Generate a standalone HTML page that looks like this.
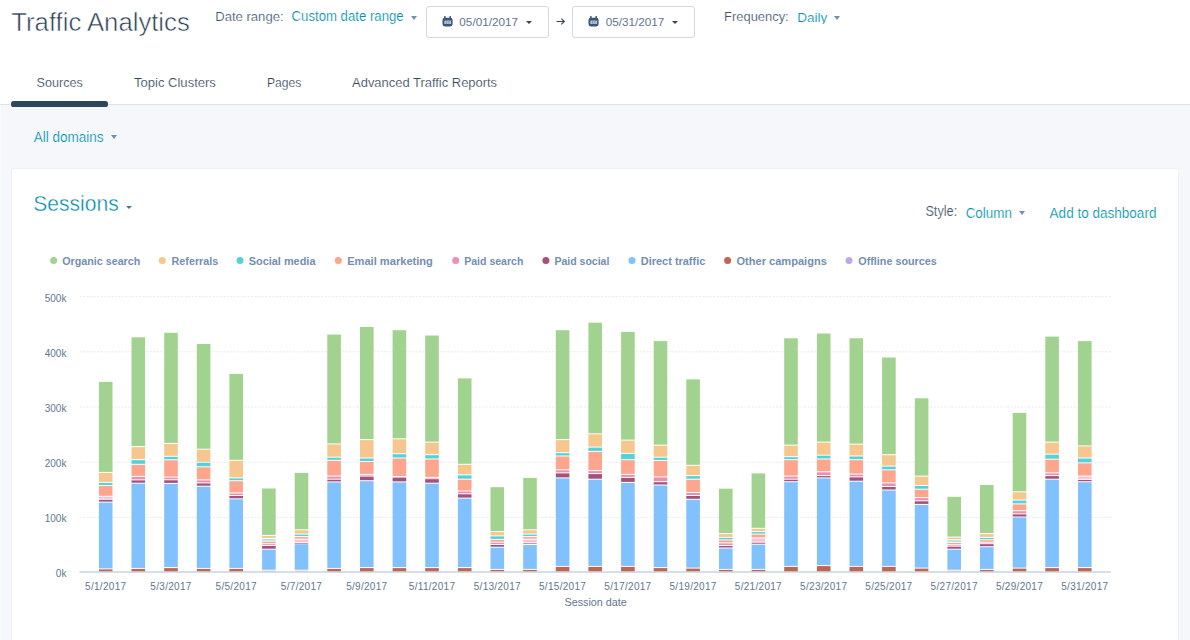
<!DOCTYPE html>
<html><head><meta charset="utf-8"><title>Traffic Analytics</title>
<style>
html,body{margin:0;padding:0;}
body{width:1190px;height:640px;overflow:hidden;background:#f5f7fa;font-family:"Liberation Sans",sans-serif;position:relative;color:#33475b;}
.abs{position:absolute;white-space:nowrap;line-height:1;}
#hdr{position:absolute;left:0;top:0;width:1190px;height:104px;background:#fff;border-bottom:1px solid #dfe3eb;box-sizing:content-box;}
#card{position:absolute;left:11px;top:168px;width:1168px;height:480px;background:#fff;border:1px solid #eef2f6;box-sizing:border-box;border-radius:3px;}
.teal{color:#0091ae;}
.ax{font-family:"Liberation Sans",sans-serif;font-size:10px;fill:#62778f;}
.xl{letter-spacing:0.3px;}
.axt{font-family:"Liberation Sans",sans-serif;font-size:11px;fill:#62778f;}
.lg{font-family:"Liberation Sans",sans-serif;font-size:11px;font-weight:bold;fill:#748eb3;}
.box{position:absolute;top:6px;height:32.4px;width:123px;border:1px solid #d0d9e4;border-radius:3px;box-sizing:border-box;background:#fff;}
.cal{position:absolute;top:16px;}
.caret{position:absolute;width:0;height:0;border-left:3.6px solid transparent;border-right:3.6px solid transparent;border-top:4px solid #33475b;}
</style></head><body>
<div id="hdr"></div>
<div class="caret" style="left:411px;top:15.6px;border-top-color:#6f90b3;"></div>
<div class="box" style="left:426px"></div>
<svg class="cal" style="left:441.6px" width="11" height="11" viewBox="0 0 11 11"><path d="M2.9 0.6v1.6M8.2 0.6v1.6" stroke="#3b5678" stroke-width="1.5" stroke-linecap="round" fill="none"/><rect x="0.5" y="1.7" width="10.1" height="8.7" rx="2.3" fill="#3b5678"/><rect x="2.3" y="4.4" width="6.8" height="3.6" rx="0.5" fill="#b4c2d4"/><path d="M4.55 4.4v3.6M6.85 4.4v3.6" stroke="#6b83a3" stroke-width="0.6"/></svg>
<div class="caret" style="left:525.9px;top:20.9px;border-left-width:3.2px;border-right-width:3.2px;border-top-width:3.4px;"></div>
<svg class="abs" style="left:555.5px;top:16.5px" width="10" height="9" viewBox="0 0 10 9"><path d="M0.5 4.5h8M5.3 1.6l3.1 2.9-3.1 2.9" stroke="#33475b" stroke-width="1.1" fill="none"/></svg>
<div class="box" style="left:571.6px"></div>
<svg class="cal" style="left:587.9px" width="11" height="11" viewBox="0 0 11 11"><path d="M2.9 0.6v1.6M8.2 0.6v1.6" stroke="#3b5678" stroke-width="1.5" stroke-linecap="round" fill="none"/><rect x="0.5" y="1.7" width="10.1" height="8.7" rx="2.3" fill="#3b5678"/><rect x="2.3" y="4.4" width="6.8" height="3.6" rx="0.5" fill="#b4c2d4"/><path d="M4.55 4.4v3.6M6.85 4.4v3.6" stroke="#6b83a3" stroke-width="0.6"/></svg>
<div class="caret" style="left:672.1px;top:20.9px;border-left-width:3.2px;border-right-width:3.2px;border-top-width:3.4px;"></div>
<div class="caret" style="left:834.4px;top:16.1px;border-top-color:#6f90b3;"></div>

<div style="position:absolute;left:11.4px;top:101.4px;width:96.9px;height:5.2px;border-radius:2.6px;background:#2f455c;"></div>

<div class="caret" style="left:110.9px;top:135.2px;border-top-color:#6f90b3;"></div>

<div style="position:absolute;left:0;top:105px;width:1px;height:535px;background:#fbfcfd;"></div>
<div id="card"></div>
<div class="caret" style="left:126.3px;top:205.8px;border-left-width:3.3px;border-right-width:3.3px;border-top-width:3.5px;border-top-color:#56718f;"></div>
<div class="caret" style="left:1019.3px;top:210.8px;border-top-color:#6f90b3;"></div>

<svg class="abs" style="left:0;top:0;font-family:&quot;Liberation Sans&quot;,sans-serif" width="1190" height="640" viewBox="0 0 1190 640">
<line x1="79.7" x2="1111" y1="517.4" y2="517.4" stroke="#e7e9f1" stroke-width="1" stroke-dasharray="2,1.5"/>
<line x1="79.7" x2="1111" y1="462.2" y2="462.2" stroke="#e7e9f1" stroke-width="1" stroke-dasharray="2,1.5"/>
<line x1="79.7" x2="1111" y1="407.0" y2="407.0" stroke="#e7e9f1" stroke-width="1" stroke-dasharray="2,1.5"/>
<line x1="79.7" x2="1111" y1="351.8" y2="351.8" stroke="#e7e9f1" stroke-width="1" stroke-dasharray="2,1.5"/>
<line x1="79.7" x2="1111" y1="296.6" y2="296.6" stroke="#e7e9f1" stroke-width="1" stroke-dasharray="2,1.5"/>
<rect x="98.9" y="381.9" width="13.6" height="90.0" fill="#a2d28f"/>
<rect x="98.9" y="472.9" width="13.6" height="9.0" fill="#f5c78e"/>
<rect x="98.9" y="482.9" width="13.6" height="2.1" fill="#51d3d9"/>
<rect x="98.9" y="486.0" width="13.6" height="9.8" fill="#fea58e"/>
<rect x="98.9" y="496.8" width="13.6" height="2.0" fill="#f4c4d6"/>
<rect x="98.9" y="499.8" width="13.6" height="1.8" fill="#a4517b"/>
<rect x="98.9" y="502.6" width="13.6" height="65.8" fill="#81c1fd"/>
<rect x="98.9" y="569.4" width="13.6" height="2.4" fill="#c0654f"/>
<rect x="131.5" y="337.3" width="13.6" height="108.8" fill="#a2d28f"/>
<rect x="131.5" y="447.1" width="13.6" height="12.1" fill="#f5c78e"/>
<rect x="131.5" y="460.2" width="13.6" height="3.6" fill="#51d3d9"/>
<rect x="131.5" y="464.8" width="13.6" height="11.1" fill="#fea58e"/>
<rect x="131.5" y="476.9" width="13.6" height="2.5" fill="#ea90b1"/>
<rect x="131.5" y="480.4" width="13.6" height="2.3" fill="#a4517b"/>
<rect x="131.5" y="483.7" width="13.6" height="84.2" fill="#81c1fd"/>
<rect x="131.5" y="568.9" width="13.6" height="2.9" fill="#c0654f"/>
<rect x="164.2" y="332.8" width="13.6" height="110.1" fill="#a2d28f"/>
<rect x="164.2" y="443.9" width="13.6" height="11.9" fill="#f5c78e"/>
<rect x="164.2" y="456.8" width="13.6" height="2.5" fill="#51d3d9"/>
<rect x="164.2" y="460.3" width="13.6" height="16.3" fill="#fea58e"/>
<rect x="164.2" y="477.6" width="13.6" height="1.7" fill="#ea90b1"/>
<rect x="164.2" y="480.3" width="13.6" height="2.6" fill="#a4517b"/>
<rect x="164.2" y="483.9" width="13.6" height="83.2" fill="#81c1fd"/>
<rect x="164.2" y="568.1" width="13.6" height="3.7" fill="#c0654f"/>
<rect x="196.8" y="343.9" width="13.6" height="104.8" fill="#a2d28f"/>
<rect x="196.8" y="449.7" width="13.6" height="12.1" fill="#f5c78e"/>
<rect x="196.8" y="462.8" width="13.6" height="3.5" fill="#51d3d9"/>
<rect x="196.8" y="467.3" width="13.6" height="12.1" fill="#fea58e"/>
<rect x="196.8" y="480.4" width="13.6" height="2.0" fill="#ea90b1"/>
<rect x="196.8" y="483.4" width="13.6" height="2.3" fill="#a4517b"/>
<rect x="196.8" y="486.7" width="13.6" height="81.2" fill="#81c1fd"/>
<rect x="196.8" y="568.9" width="13.6" height="2.9" fill="#c0654f"/>
<rect x="229.4" y="373.9" width="13.6" height="85.9" fill="#a2d28f"/>
<rect x="229.4" y="460.8" width="13.6" height="16.6" fill="#f5c78e"/>
<rect x="229.4" y="478.4" width="13.6" height="1.8" fill="#51d3d9"/>
<rect x="229.4" y="481.2" width="13.6" height="11.3" fill="#fea58e"/>
<rect x="229.4" y="493.5" width="13.6" height="1.5" fill="#ea90b1"/>
<rect x="229.4" y="496.0" width="13.6" height="2.3" fill="#a4517b"/>
<rect x="229.4" y="499.3" width="13.6" height="68.6" fill="#81c1fd"/>
<rect x="229.4" y="568.9" width="13.6" height="2.9" fill="#c0654f"/>
<rect x="262.1" y="488.5" width="13.6" height="46.4" fill="#a2d28f"/>
<rect x="262.1" y="535.9" width="13.6" height="2.0" fill="#f5c78e"/>
<rect x="262.1" y="538.9" width="13.6" height="1.8" fill="#a3e7ea"/>
<rect x="262.1" y="541.7" width="13.6" height="1.5" fill="#fea58e"/>
<rect x="262.1" y="544.2" width="13.6" height="0.8" fill="#ea90b1"/>
<rect x="262.1" y="546.0" width="13.6" height="2.7" fill="#a4517b"/>
<rect x="262.1" y="549.7" width="13.6" height="20.0" fill="#81c1fd"/>
<rect x="262.1" y="570.7" width="13.6" height="1.1" fill="#e3b5aa"/>
<rect x="294.7" y="472.9" width="13.6" height="56.4" fill="#a2d28f"/>
<rect x="294.7" y="530.3" width="13.6" height="3.3" fill="#f5c78e"/>
<rect x="294.7" y="534.6" width="13.6" height="1.5" fill="#51d3d9"/>
<rect x="294.7" y="537.1" width="13.6" height="1.6" fill="#fea58e"/>
<rect x="294.7" y="539.7" width="13.6" height="2.5" fill="#f4c4d6"/>
<rect x="294.7" y="543.2" width="13.6" height="0.6" fill="#a4517b"/>
<rect x="294.7" y="544.2" width="13.6" height="25.5" fill="#81c1fd"/>
<rect x="294.7" y="570.7" width="13.6" height="1.1" fill="#e3b5aa"/>
<rect x="327.3" y="334.5" width="13.6" height="108.9" fill="#a2d28f"/>
<rect x="327.3" y="444.4" width="13.6" height="12.3" fill="#f5c78e"/>
<rect x="327.3" y="457.7" width="13.6" height="2.1" fill="#51d3d9"/>
<rect x="327.3" y="460.8" width="13.6" height="14.8" fill="#fea58e"/>
<rect x="327.3" y="476.6" width="13.6" height="2.1" fill="#ea90b1"/>
<rect x="327.3" y="479.7" width="13.6" height="1.7" fill="#a4517b"/>
<rect x="327.3" y="482.4" width="13.6" height="85.5" fill="#81c1fd"/>
<rect x="327.3" y="568.9" width="13.6" height="2.9" fill="#c0654f"/>
<rect x="360.0" y="327.0" width="13.6" height="112.1" fill="#a2d28f"/>
<rect x="360.0" y="440.1" width="13.6" height="17.4" fill="#f5c78e"/>
<rect x="360.0" y="458.5" width="13.6" height="2.5" fill="#51d3d9"/>
<rect x="360.0" y="462.0" width="13.6" height="11.9" fill="#fea58e"/>
<rect x="360.0" y="474.9" width="13.6" height="0.7" fill="#ea90b1"/>
<rect x="360.0" y="476.6" width="13.6" height="3.6" fill="#a4517b"/>
<rect x="360.0" y="481.2" width="13.6" height="85.9" fill="#81c1fd"/>
<rect x="360.0" y="568.1" width="13.6" height="3.7" fill="#c0654f"/>
<rect x="392.6" y="330.2" width="13.6" height="108.1" fill="#a2d28f"/>
<rect x="392.6" y="439.3" width="13.6" height="13.9" fill="#f5c78e"/>
<rect x="392.6" y="454.2" width="13.6" height="3.3" fill="#51d3d9"/>
<rect x="392.6" y="458.5" width="13.6" height="17.5" fill="#fea58e"/>
<rect x="392.6" y="477.0" width="13.6" height="0.6" fill="#ea90b1"/>
<rect x="392.6" y="477.9" width="13.6" height="3.5" fill="#a4517b"/>
<rect x="392.6" y="482.4" width="13.6" height="84.7" fill="#81c1fd"/>
<rect x="392.6" y="568.1" width="13.6" height="3.7" fill="#c0654f"/>
<rect x="425.2" y="335.5" width="13.6" height="106.1" fill="#a2d28f"/>
<rect x="425.2" y="442.6" width="13.6" height="11.6" fill="#f5c78e"/>
<rect x="425.2" y="455.2" width="13.6" height="3.3" fill="#51d3d9"/>
<rect x="425.2" y="459.5" width="13.6" height="17.4" fill="#fea58e"/>
<rect x="425.2" y="477.9" width="13.6" height="0.6" fill="#ea90b1"/>
<rect x="425.2" y="479.2" width="13.6" height="3.5" fill="#a4517b"/>
<rect x="425.2" y="483.7" width="13.6" height="83.4" fill="#81c1fd"/>
<rect x="425.2" y="568.1" width="13.6" height="3.7" fill="#c0654f"/>
<rect x="457.9" y="378.4" width="13.6" height="85.4" fill="#a2d28f"/>
<rect x="457.9" y="464.8" width="13.6" height="9.6" fill="#f5c78e"/>
<rect x="457.9" y="475.4" width="13.6" height="3.3" fill="#51d3d9"/>
<rect x="457.9" y="479.7" width="13.6" height="10.8" fill="#fea58e"/>
<rect x="457.9" y="491.5" width="13.6" height="1.8" fill="#ea90b1"/>
<rect x="457.9" y="494.3" width="13.6" height="3.3" fill="#a4517b"/>
<rect x="457.9" y="498.6" width="13.6" height="68.5" fill="#81c1fd"/>
<rect x="457.9" y="568.1" width="13.6" height="3.7" fill="#c0654f"/>
<rect x="490.5" y="487.2" width="13.6" height="43.9" fill="#a2d28f"/>
<rect x="490.5" y="532.1" width="13.6" height="3.3" fill="#f5c78e"/>
<rect x="490.5" y="536.4" width="13.6" height="2.5" fill="#51d3d9"/>
<rect x="490.5" y="539.9" width="13.6" height="1.8" fill="#fea58e"/>
<rect x="490.5" y="542.7" width="13.6" height="1.3" fill="#ea90b1"/>
<rect x="490.5" y="545.0" width="13.6" height="1.7" fill="#a4517b"/>
<rect x="490.5" y="547.7" width="13.6" height="21.2" fill="#81c1fd"/>
<rect x="490.5" y="569.9" width="13.6" height="1.9" fill="#c0654f"/>
<rect x="523.2" y="477.9" width="13.6" height="51.4" fill="#a2d28f"/>
<rect x="523.2" y="530.3" width="13.6" height="3.3" fill="#f5c78e"/>
<rect x="523.2" y="534.6" width="13.6" height="1.5" fill="#51d3d9"/>
<rect x="523.2" y="537.1" width="13.6" height="1.6" fill="#fea58e"/>
<rect x="523.2" y="539.7" width="13.6" height="2.7" fill="#f4c4d6"/>
<rect x="523.2" y="543.4" width="13.6" height="0.6" fill="#a4517b"/>
<rect x="523.2" y="545.0" width="13.6" height="23.9" fill="#81c1fd"/>
<rect x="523.2" y="569.9" width="13.6" height="1.9" fill="#c0654f"/>
<rect x="555.8" y="330.2" width="13.6" height="108.9" fill="#a2d28f"/>
<rect x="555.8" y="440.1" width="13.6" height="12.1" fill="#f5c78e"/>
<rect x="555.8" y="453.2" width="13.6" height="2.3" fill="#51d3d9"/>
<rect x="555.8" y="456.5" width="13.6" height="12.8" fill="#fea58e"/>
<rect x="555.8" y="470.3" width="13.6" height="2.1" fill="#ea90b1"/>
<rect x="555.8" y="473.4" width="13.6" height="4.0" fill="#a4517b"/>
<rect x="555.8" y="478.4" width="13.6" height="87.5" fill="#81c1fd"/>
<rect x="555.8" y="566.9" width="13.6" height="4.9" fill="#c0654f"/>
<rect x="588.4" y="322.7" width="13.6" height="110.6" fill="#a2d28f"/>
<rect x="588.4" y="434.3" width="13.6" height="12.3" fill="#f5c78e"/>
<rect x="588.4" y="447.6" width="13.6" height="3.3" fill="#51d3d9"/>
<rect x="588.4" y="451.9" width="13.6" height="18.2" fill="#fea58e"/>
<rect x="588.4" y="471.1" width="13.6" height="2.0" fill="#ea90b1"/>
<rect x="588.4" y="474.1" width="13.6" height="4.6" fill="#a4517b"/>
<rect x="588.4" y="479.7" width="13.6" height="86.2" fill="#81c1fd"/>
<rect x="588.4" y="566.9" width="13.6" height="4.9" fill="#c0654f"/>
<rect x="621.1" y="332.0" width="13.6" height="107.6" fill="#a2d28f"/>
<rect x="621.1" y="440.6" width="13.6" height="12.3" fill="#f5c78e"/>
<rect x="621.1" y="453.9" width="13.6" height="5.3" fill="#51d3d9"/>
<rect x="621.1" y="460.2" width="13.6" height="13.7" fill="#fea58e"/>
<rect x="621.1" y="474.9" width="13.6" height="2.0" fill="#ea90b1"/>
<rect x="621.1" y="477.9" width="13.6" height="4.0" fill="#a4517b"/>
<rect x="621.1" y="482.9" width="13.6" height="83.0" fill="#81c1fd"/>
<rect x="621.1" y="566.9" width="13.6" height="4.9" fill="#c0654f"/>
<rect x="653.7" y="341.1" width="13.6" height="103.5" fill="#a2d28f"/>
<rect x="653.7" y="445.6" width="13.6" height="11.1" fill="#f5c78e"/>
<rect x="653.7" y="457.7" width="13.6" height="2.3" fill="#51d3d9"/>
<rect x="653.7" y="461.0" width="13.6" height="15.4" fill="#fea58e"/>
<rect x="653.7" y="477.4" width="13.6" height="3.8" fill="#ea90b1"/>
<rect x="653.7" y="482.2" width="13.6" height="2.3" fill="#a4517b"/>
<rect x="653.7" y="485.5" width="13.6" height="81.6" fill="#81c1fd"/>
<rect x="653.7" y="568.1" width="13.6" height="3.7" fill="#c0654f"/>
<rect x="686.3" y="379.4" width="13.6" height="85.4" fill="#a2d28f"/>
<rect x="686.3" y="465.8" width="13.6" height="9.3" fill="#f5c78e"/>
<rect x="686.3" y="476.1" width="13.6" height="2.6" fill="#51d3d9"/>
<rect x="686.3" y="479.7" width="13.6" height="12.3" fill="#fea58e"/>
<rect x="686.3" y="493.0" width="13.6" height="2.0" fill="#ea90b1"/>
<rect x="686.3" y="496.0" width="13.6" height="2.8" fill="#a4517b"/>
<rect x="686.3" y="499.8" width="13.6" height="67.8" fill="#81c1fd"/>
<rect x="686.3" y="568.6" width="13.6" height="3.2" fill="#c0654f"/>
<rect x="719.0" y="488.7" width="13.6" height="44.4" fill="#a2d28f"/>
<rect x="719.0" y="534.1" width="13.6" height="2.8" fill="#f5c78e"/>
<rect x="719.0" y="537.9" width="13.6" height="1.5" fill="#51d3d9"/>
<rect x="719.0" y="540.4" width="13.6" height="2.0" fill="#fea58e"/>
<rect x="719.0" y="543.4" width="13.6" height="1.6" fill="#ea90b1"/>
<rect x="719.0" y="546.0" width="13.6" height="1.5" fill="#a4517b"/>
<rect x="719.0" y="548.5" width="13.6" height="20.4" fill="#81c1fd"/>
<rect x="719.0" y="569.9" width="13.6" height="1.9" fill="#c0654f"/>
<rect x="751.6" y="473.4" width="13.6" height="54.4" fill="#a2d28f"/>
<rect x="751.6" y="528.8" width="13.6" height="2.3" fill="#f5c78e"/>
<rect x="751.6" y="532.1" width="13.6" height="1.5" fill="#51d3d9"/>
<rect x="751.6" y="534.6" width="13.6" height="2.8" fill="#fea58e"/>
<rect x="751.6" y="538.4" width="13.6" height="3.3" fill="#f4c4d6"/>
<rect x="751.6" y="542.7" width="13.6" height="1.0" fill="#a4517b"/>
<rect x="751.6" y="544.7" width="13.6" height="24.2" fill="#81c1fd"/>
<rect x="751.6" y="569.9" width="13.6" height="1.9" fill="#c0654f"/>
<rect x="784.2" y="338.3" width="13.6" height="106.3" fill="#a2d28f"/>
<rect x="784.2" y="445.6" width="13.6" height="10.6" fill="#f5c78e"/>
<rect x="784.2" y="457.2" width="13.6" height="2.0" fill="#51d3d9"/>
<rect x="784.2" y="460.2" width="13.6" height="15.4" fill="#fea58e"/>
<rect x="784.2" y="476.6" width="13.6" height="2.1" fill="#ea90b1"/>
<rect x="784.2" y="479.7" width="13.6" height="1.5" fill="#a4517b"/>
<rect x="784.2" y="482.2" width="13.6" height="83.7" fill="#81c1fd"/>
<rect x="784.2" y="566.9" width="13.6" height="4.9" fill="#c0654f"/>
<rect x="816.9" y="333.5" width="13.6" height="108.1" fill="#a2d28f"/>
<rect x="816.9" y="442.6" width="13.6" height="12.1" fill="#f5c78e"/>
<rect x="816.9" y="455.7" width="13.6" height="2.8" fill="#51d3d9"/>
<rect x="816.9" y="459.5" width="13.6" height="11.8" fill="#fea58e"/>
<rect x="816.9" y="472.3" width="13.6" height="2.8" fill="#ea90b1"/>
<rect x="816.9" y="476.1" width="13.6" height="1.3" fill="#a4517b"/>
<rect x="816.9" y="478.4" width="13.6" height="86.7" fill="#81c1fd"/>
<rect x="816.9" y="566.1" width="13.6" height="5.7" fill="#c0654f"/>
<rect x="849.5" y="338.3" width="13.6" height="105.3" fill="#a2d28f"/>
<rect x="849.5" y="444.6" width="13.6" height="10.9" fill="#f5c78e"/>
<rect x="849.5" y="456.5" width="13.6" height="2.7" fill="#51d3d9"/>
<rect x="849.5" y="460.2" width="13.6" height="13.4" fill="#fea58e"/>
<rect x="849.5" y="474.6" width="13.6" height="1.8" fill="#ea90b1"/>
<rect x="849.5" y="477.4" width="13.6" height="3.3" fill="#a4517b"/>
<rect x="849.5" y="481.7" width="13.6" height="84.2" fill="#81c1fd"/>
<rect x="849.5" y="566.9" width="13.6" height="4.9" fill="#c0654f"/>
<rect x="882.1" y="357.5" width="13.6" height="96.7" fill="#a2d28f"/>
<rect x="882.1" y="455.2" width="13.6" height="10.4" fill="#f5c78e"/>
<rect x="882.1" y="466.6" width="13.6" height="2.7" fill="#51d3d9"/>
<rect x="882.1" y="470.3" width="13.6" height="12.1" fill="#fea58e"/>
<rect x="882.1" y="483.4" width="13.6" height="2.6" fill="#ea90b1"/>
<rect x="882.1" y="487.0" width="13.6" height="2.5" fill="#a4517b"/>
<rect x="882.1" y="490.5" width="13.6" height="75.4" fill="#81c1fd"/>
<rect x="882.1" y="566.9" width="13.6" height="4.9" fill="#c0654f"/>
<rect x="914.8" y="398.3" width="13.6" height="77.3" fill="#a2d28f"/>
<rect x="914.8" y="476.6" width="13.6" height="8.4" fill="#f5c78e"/>
<rect x="914.8" y="486.0" width="13.6" height="2.7" fill="#51d3d9"/>
<rect x="914.8" y="489.7" width="13.6" height="7.4" fill="#fea58e"/>
<rect x="914.8" y="498.1" width="13.6" height="2.2" fill="#ea90b1"/>
<rect x="914.8" y="501.3" width="13.6" height="2.6" fill="#a4517b"/>
<rect x="914.8" y="504.9" width="13.6" height="62.7" fill="#81c1fd"/>
<rect x="914.8" y="568.6" width="13.6" height="3.2" fill="#c0654f"/>
<rect x="947.4" y="496.8" width="13.6" height="39.8" fill="#a2d28f"/>
<rect x="947.4" y="537.6" width="13.6" height="1.6" fill="#f5c78e"/>
<rect x="947.4" y="540.2" width="13.6" height="1.7" fill="#a3e7ea"/>
<rect x="947.4" y="542.9" width="13.6" height="1.3" fill="#fea58e"/>
<rect x="947.4" y="545.2" width="13.6" height="0.6" fill="#ea90b1"/>
<rect x="947.4" y="546.7" width="13.6" height="2.0" fill="#a4517b"/>
<rect x="947.4" y="549.7" width="13.6" height="20.0" fill="#81c1fd"/>
<rect x="947.4" y="570.7" width="13.6" height="1.1" fill="#e3b5aa"/>
<rect x="980.0" y="485.0" width="13.6" height="48.1" fill="#a2d28f"/>
<rect x="980.0" y="534.1" width="13.6" height="2.8" fill="#f5c78e"/>
<rect x="980.0" y="537.9" width="13.6" height="1.3" fill="#51d3d9"/>
<rect x="980.0" y="540.2" width="13.6" height="1.5" fill="#fea58e"/>
<rect x="980.0" y="542.7" width="13.6" height="0.6" fill="#ea90b1"/>
<rect x="980.0" y="544.2" width="13.6" height="2.0" fill="#a4517b"/>
<rect x="980.0" y="547.2" width="13.6" height="21.7" fill="#81c1fd"/>
<rect x="980.0" y="569.9" width="13.6" height="1.9" fill="#c0654f"/>
<rect x="1012.7" y="412.9" width="13.6" height="78.4" fill="#a2d28f"/>
<rect x="1012.7" y="492.3" width="13.6" height="7.3" fill="#f5c78e"/>
<rect x="1012.7" y="500.6" width="13.6" height="2.8" fill="#51d3d9"/>
<rect x="1012.7" y="504.4" width="13.6" height="5.8" fill="#fea58e"/>
<rect x="1012.7" y="511.2" width="13.6" height="2.2" fill="#ea90b1"/>
<rect x="1012.7" y="514.4" width="13.6" height="2.1" fill="#a4517b"/>
<rect x="1012.7" y="517.5" width="13.6" height="50.1" fill="#81c1fd"/>
<rect x="1012.7" y="568.6" width="13.6" height="3.2" fill="#c0654f"/>
<rect x="1045.3" y="336.6" width="13.6" height="105.0" fill="#a2d28f"/>
<rect x="1045.3" y="442.6" width="13.6" height="11.1" fill="#f5c78e"/>
<rect x="1045.3" y="454.7" width="13.6" height="4.0" fill="#51d3d9"/>
<rect x="1045.3" y="459.7" width="13.6" height="12.7" fill="#fea58e"/>
<rect x="1045.3" y="473.4" width="13.6" height="1.7" fill="#ea90b1"/>
<rect x="1045.3" y="476.1" width="13.6" height="2.6" fill="#a4517b"/>
<rect x="1045.3" y="479.7" width="13.6" height="87.4" fill="#81c1fd"/>
<rect x="1045.3" y="568.1" width="13.6" height="3.7" fill="#c0654f"/>
<rect x="1078.0" y="341.1" width="13.6" height="104.3" fill="#a2d28f"/>
<rect x="1078.0" y="446.4" width="13.6" height="11.1" fill="#f5c78e"/>
<rect x="1078.0" y="458.5" width="13.6" height="3.8" fill="#51d3d9"/>
<rect x="1078.0" y="463.3" width="13.6" height="12.3" fill="#fea58e"/>
<rect x="1078.0" y="476.6" width="13.6" height="2.3" fill="#f4c4d6"/>
<rect x="1078.0" y="479.9" width="13.6" height="1.3" fill="#a4517b"/>
<rect x="1078.0" y="482.2" width="13.6" height="84.9" fill="#81c1fd"/>
<rect x="1078.0" y="568.1" width="13.6" height="3.7" fill="#c0654f"/>
<line x1="79.5" x2="1111" y1="572.1" y2="572.1" stroke="#c9d4e1" stroke-width="1.5"/>
<text x="66.4" y="576.6" text-anchor="end" class="ax">0k</text>
<text x="66.4" y="521.7" text-anchor="end" class="ax">100k</text>
<text x="66.4" y="467.2" text-anchor="end" class="ax">200k</text>
<text x="66.4" y="412.1" text-anchor="end" class="ax">300k</text>
<text x="66.4" y="357.2" text-anchor="end" class="ax">400k</text>
<text x="66.4" y="301.9" text-anchor="end" class="ax">500k</text>
<text x="105.7" y="589.6" text-anchor="middle" class="ax xl">5/1/2017</text>
<text x="171.0" y="589.6" text-anchor="middle" class="ax xl">5/3/2017</text>
<text x="236.2" y="589.6" text-anchor="middle" class="ax xl">5/5/2017</text>
<text x="301.5" y="589.6" text-anchor="middle" class="ax xl">5/7/2017</text>
<text x="366.8" y="589.6" text-anchor="middle" class="ax xl">5/9/2017</text>
<text x="432.1" y="589.6" text-anchor="middle" class="ax xl">5/11/2017</text>
<text x="497.3" y="589.6" text-anchor="middle" class="ax xl">5/13/2017</text>
<text x="562.6" y="589.6" text-anchor="middle" class="ax xl">5/15/2017</text>
<text x="627.9" y="589.6" text-anchor="middle" class="ax xl">5/17/2017</text>
<text x="693.1" y="589.6" text-anchor="middle" class="ax xl">5/19/2017</text>
<text x="758.4" y="589.6" text-anchor="middle" class="ax xl">5/21/2017</text>
<text x="823.7" y="589.6" text-anchor="middle" class="ax xl">5/23/2017</text>
<text x="888.9" y="589.6" text-anchor="middle" class="ax xl">5/25/2017</text>
<text x="954.2" y="589.6" text-anchor="middle" class="ax xl">5/27/2017</text>
<text x="1019.5" y="589.6" text-anchor="middle" class="ax xl">5/29/2017</text>
<text x="1084.8" y="589.6" text-anchor="middle" class="ax xl">5/31/2017</text>
<text x="564.5" y="605.9" class="axt" textLength="62.3" lengthAdjust="spacingAndGlyphs">Session date</text>
<circle cx="53.6" cy="260.5" r="3.5" fill="#a2d28f"/>
<text x="62.2" y="265.2" class="lg" textLength="78.1" lengthAdjust="spacingAndGlyphs">Organic search</text>
<circle cx="162.3" cy="260.5" r="3.5" fill="#f5c78e"/>
<text x="171.6" y="265.2" class="lg" textLength="46.6" lengthAdjust="spacingAndGlyphs">Referrals</text>
<circle cx="240" cy="260.5" r="3.5" fill="#51d3d9"/>
<text x="248.7" y="265.2" class="lg" textLength="66.8" lengthAdjust="spacingAndGlyphs">Social media</text>
<circle cx="338.3" cy="260.5" r="3.5" fill="#fea58e"/>
<text x="347.2" y="265.2" class="lg" textLength="85.7" lengthAdjust="spacingAndGlyphs">Email marketing</text>
<circle cx="455.7" cy="260.5" r="3.5" fill="#ea90b1"/>
<text x="464.2" y="265.2" class="lg" textLength="59.2" lengthAdjust="spacingAndGlyphs">Paid search</text>
<circle cx="545.9" cy="260.5" r="3.5" fill="#a4517b"/>
<text x="554.4" y="265.2" class="lg" textLength="55.0" lengthAdjust="spacingAndGlyphs">Paid social</text>
<circle cx="632" cy="260.5" r="3.5" fill="#81c1fd"/>
<text x="640.8" y="265.2" class="lg" textLength="64.5" lengthAdjust="spacingAndGlyphs">Direct traffic</text>
<circle cx="727.6" cy="260.5" r="3.5" fill="#c0654f"/>
<text x="736.5" y="265.2" class="lg" textLength="90.3" lengthAdjust="spacingAndGlyphs">Other campaigns</text>
<circle cx="849" cy="260.5" r="3.5" fill="#bda9ea"/>
<text x="858.3" y="265.2" class="lg" textLength="78.5" lengthAdjust="spacingAndGlyphs">Offline sources</text>
<text x="11.31" y="30.8" font-size="26.4" fill="#2b3e52" textLength="178.48" lengthAdjust="spacingAndGlyphs" stroke="#fff" stroke-width="0.55" paint-order="fill stroke">Traffic Analytics</text>
<text x="215.20" y="20.7" font-size="13.4" fill="#3e546c" textLength="68.40" lengthAdjust="spacingAndGlyphs" stroke="#fff" stroke-width="0.18" paint-order="fill stroke">Date range:</text>
<text x="291.57" y="20.9" font-size="14.4" fill="#0091ae" textLength="112.06" lengthAdjust="spacingAndGlyphs" stroke="#fff" stroke-width="0.18" paint-order="fill stroke">Custom date range</text>
<text x="459.35" y="25.8" font-size="11.5" fill="#5f7590" textLength="58.69" lengthAdjust="spacingAndGlyphs" >05/01/2017</text>
<text x="605.65" y="25.8" font-size="11.5" fill="#5f7590" textLength="58.69" lengthAdjust="spacingAndGlyphs" >05/31/2017</text>
<text x="724.09" y="20.8" font-size="13.6" fill="#3e546c" textLength="64.62" lengthAdjust="spacingAndGlyphs" stroke="#fff" stroke-width="0.18" paint-order="fill stroke">Frequency:</text>
<text x="797.19" y="22.3" font-size="13.6" fill="#0091ae" textLength="30.12" lengthAdjust="spacingAndGlyphs" stroke="#fff" stroke-width="0.18" paint-order="fill stroke">Daily</text>
<text x="36.59" y="87" font-size="13.7" fill="#33475b" textLength="46.22" lengthAdjust="spacingAndGlyphs" stroke="#fff" stroke-width="0.18" paint-order="fill stroke">Sources</text>
<text x="133.99" y="87" font-size="13.7" fill="#33475b" textLength="81.92" lengthAdjust="spacingAndGlyphs" stroke="#fff" stroke-width="0.18" paint-order="fill stroke">Topic Clusters</text>
<text x="266.89" y="87" font-size="13.7" fill="#33475b" textLength="34.32" lengthAdjust="spacingAndGlyphs" stroke="#fff" stroke-width="0.18" paint-order="fill stroke">Pages</text>
<text x="352.09" y="87" font-size="13.7" fill="#33475b" textLength="145.02" lengthAdjust="spacingAndGlyphs" stroke="#fff" stroke-width="0.18" paint-order="fill stroke">Advanced Traffic Reports</text>
<text x="33.69" y="141.6" font-size="13.8" fill="#0091ae" textLength="69.83" lengthAdjust="spacingAndGlyphs" stroke="#fff" stroke-width="0.18" paint-order="fill stroke">All domains</text>
<text x="33.25" y="210.8" font-size="21.8" fill="#008aa8" textLength="85.51" lengthAdjust="spacingAndGlyphs" stroke="#fff" stroke-width="0.38" paint-order="fill stroke">Sessions</text>
<text x="925.39" y="215.6" font-size="13.8" fill="#3e546c" textLength="31.83" lengthAdjust="spacingAndGlyphs" stroke="#fff" stroke-width="0.18" paint-order="fill stroke">Style:</text>
<text x="965.68" y="217.9" font-size="14" fill="#0091ae" textLength="46.24" lengthAdjust="spacingAndGlyphs" stroke="#fff" stroke-width="0.18" paint-order="fill stroke">Column</text>
<text x="1049.58" y="217.9" font-size="14" fill="#0091ae" textLength="106.84" lengthAdjust="spacingAndGlyphs" stroke="#fff" stroke-width="0.18" paint-order="fill stroke">Add to dashboard</text>
<rect x="795" y="23.9" width="36" height="5" fill="#fff"/>
</svg>
</body></html>
